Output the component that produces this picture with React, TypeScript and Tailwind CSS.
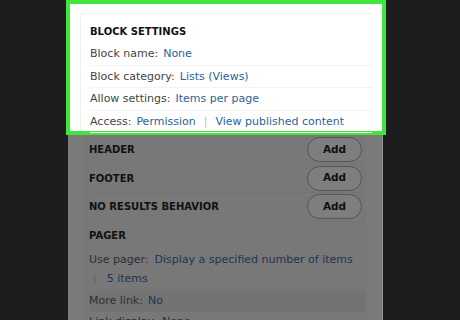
import React from 'react'

const font = { fontFamily: '"DejaVu Sans", Verdana, sans-serif' }

function Field({ label, children }: { label: string; children: React.ReactNode }) {
  return (
    <div className="flex h-[22.5px] items-center gap-[5px] border-b border-[#f3f3f3] pt-[1px] text-[11px] text-[#444]">
      <span>{label}</span>
      {children}
    </div>
  )
}

function Link({ children }: { children: React.ReactNode }) {
  return <span className="text-[#2a6496]">{children}</span>
}

function Section({ title }: { title: string }) {
  return (
    <div className="flex h-[28.5px] items-center justify-between border-b border-[#747474] pr-[4px]">
      <span className="text-[10px] font-bold text-[#111]">{title}</span>
      <button
        type="button"
        className="h-[25px] w-[55px] rounded-full border border-[#555] bg-[#7e7e7e] text-[10.5px] font-bold text-[#111]"
      >
        Add
      </button>
    </div>
  )
}

export default function App() {
  return (
    <div className="h-[320px] w-[460px] overflow-hidden bg-[#1d1d1d] pl-[66px]" style={font}>
      <div className="w-[320px]">
        <div className="h-[135px] border-4 border-[#3fe63b] bg-white px-[10px] pt-[9px]">
          <div className="h-full border-l border-t border-[#f0f0f0] pl-[9px] pt-[10px]">
            <div className="mb-[4px] text-[10px] font-bold text-[#111]">BLOCK SETTINGS</div>
            <Field label="Block name:">
              <Link>None</Link>
            </Field>
            <Field label="Block category:">
              <Link>Lists (Views)</Link>
            </Field>
            <Field label="Allow settings:">
              <Link>Items per page</Link>
            </Field>
            <Field label="Access:">
              <Link>Permission</Link>
              <span className="mx-[3px] text-[#bbb]">|</span>
              <Link>View published content</Link>
            </Field>
          </div>
        </div>
        <div className="ml-[2px] h-[185px] w-[315px] border-r border-[#959595] bg-[#7a7a7a] px-[16px] pt-[1px]">
          <div className="bg-[#787878] pl-[5px]">
            <Section title="HEADER" />
            <Section title="FOOTER" />
            <Section title="NO RESULTS BEHAVIOR" />
            <div className="flex h-[28px] items-center text-[10px] font-bold text-[#111]">PAGER</div>
            <div className="text-[11px] leading-[19px] text-[#2e2e2e]">
              <div className="flex gap-[6px]">
                <span>Use pager:</span>
                <span className="text-[#1d3550]">Display a specified number of items</span>
              </div>
              <div className="flex gap-[10px] pl-[4px]">
                <span className="text-[#666]">|</span>
                <span className="text-[#1d3550]">5 items</span>
              </div>
            </div>
            <div className="mt-[3px] flex h-[21px] items-center gap-[5px] bg-[#737373] text-[11px] text-[#2e2e2e]">
              <span>More link:</span>
              <span className="text-[#1d3550]">No</span>
            </div>
            <div className="flex h-[21px] items-center gap-[5px] text-[11px] text-[#2e2e2e]">
              <span>Link display:</span>
              <span className="text-[#1d3550]">None</span>
            </div>
          </div>
        </div>
      </div>
    </div>
  )
}
